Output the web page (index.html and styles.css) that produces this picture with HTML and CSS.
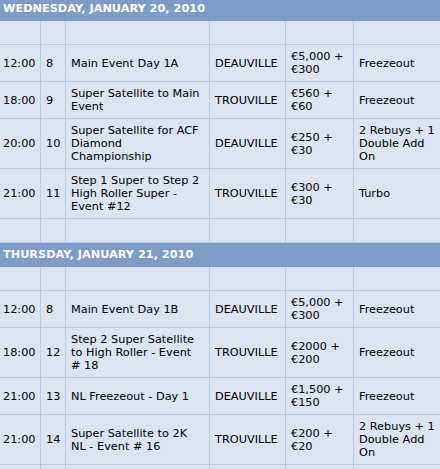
FILE: index.html
```html
<!DOCTYPE html>
<html>
<head>
<meta charset="utf-8">
<link rel="stylesheet" href="styles.css">
</head>
<body>
<table class="schedule">
  <colgroup>
    <col class="c-time"><col class="c-num"><col class="c-event"><col class="c-venue"><col class="c-price"><col class="c-type">
  </colgroup>
  <tbody>
    <tr class="day"><td colspan="6">Wednesday, January 20, 2010</td></tr>
    <tr class="blank"><td>&nbsp;</td><td></td><td></td><td></td><td></td><td></td></tr>
    <tr><td>12:00</td><td>8</td><td>Main Event Day 1A</td><td>DEAUVILLE</td><td>€5,000 +<br>€300</td><td>Freezeout</td></tr>
    <tr><td>18:00</td><td>9</td><td>Super Satellite to Main<br>Event</td><td>TROUVILLE</td><td>€560 +<br>€60</td><td>Freezeout</td></tr>
    <tr><td>20:00</td><td>10</td><td>Super Satellite for ACF<br>Diamond<br>Championship</td><td>DEAUVILLE</td><td>€250 +<br>€30</td><td>2 Rebuys + 1<br>Double Add<br>On</td></tr>
    <tr><td>21:00</td><td>11</td><td>Step 1 Super to Step 2<br>High Roller Super -<br>Event #12</td><td>TROUVILLE</td><td>€300 +<br>€30</td><td>Turbo</td></tr>
    <tr class="blank"><td>&nbsp;</td><td></td><td></td><td></td><td></td><td></td></tr>
    <tr class="day"><td colspan="6">Thursday, January 21, 2010</td></tr>
    <tr class="blank"><td>&nbsp;</td><td></td><td></td><td></td><td></td><td></td></tr>
    <tr><td>12:00</td><td>8</td><td>Main Event Day 1B</td><td>DEAUVILLE</td><td>€5,000 +<br>€300</td><td>Freezeout</td></tr>
    <tr><td>18:00</td><td>12</td><td>Step 2 Super Satellite<br>to High Roller - Event<br># 18</td><td>TROUVILLE</td><td>€2000 +<br>€200</td><td>Freezeout</td></tr>
    <tr><td>21:00</td><td>13</td><td>NL Freezeout - Day 1</td><td>DEAUVILLE</td><td>€1,500 +<br>€150</td><td>Freezeout</td></tr>
    <tr><td>21:00</td><td>14</td><td>Super Satellite to 2K<br>NL - Event # 16</td><td>TROUVILLE</td><td>€200 +<br>€20</td><td>2 Rebuys + 1<br>Double Add<br>On</td></tr>
    <tr class="blank"><td>&nbsp;</td><td></td><td></td><td></td><td></td><td></td></tr>
  </tbody>
</table>
</body>
</html>
```

FILE: styles.css
```css
html, body {
  margin: 0;
  padding: 0;
  background: #dbe4f0;
  overflow: hidden;
}
.schedule {
  border-collapse: collapse;
  table-layout: fixed;
  width: 445px;
  margin: -4px 0 0 -3px;
  font-family: "DejaVu Sans", Verdana, sans-serif;
  font-size: 11.3px;
  line-height: 13px;
  color: #000;
}
.c-time { width: 43px; }
.c-num { width: 25px; }
.c-event { width: 144px; }
.c-venue { width: 76px; }
.c-price { width: 68px; }
.c-type { width: 89px; }
.schedule td {
  border: 1px solid #b9cce4;
  background: #dbe4f0;
  padding: 5px 3px 5px 5px;
  vertical-align: middle;
  white-space: nowrap;
}
.schedule tr.day td {
  background: #7e9cc8;
  color: #fff;
  font-weight: bold;
  text-transform: uppercase;
  border-color: #7e9cc8;
}
```
